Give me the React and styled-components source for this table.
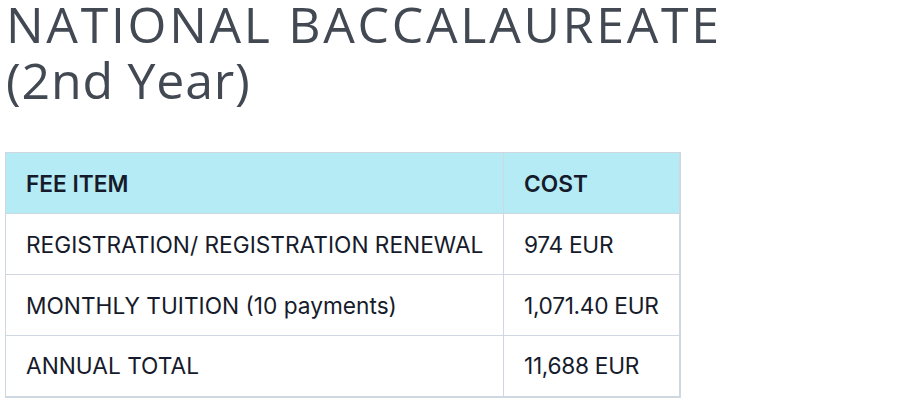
import React from "react";
import styled, { createGlobalStyle } from "styled-components";

const Global = createGlobalStyle`
  html, body { margin: 0; padding: 0; background: #ffffff; }
  body { font-family: "Inter", "Liberation Sans", sans-serif; }
`;

const Page = styled.div`
  padding: 0 5px;
  width: 902px;
  height: 400px;
  overflow: hidden;
  box-sizing: border-box;
`;

const Title = styled.h1`
  margin: -4px 0 0 0;
  padding-left: 1px;
  font-family: "Open Sans", "Liberation Sans", sans-serif;
  font-weight: 400;
  font-size: 50px;
  line-height: 56px;
  color: #434953;
`;

const TitleLine = styled.span`
  display: block;
  letter-spacing: ${(p) => p.$spacing}px;
  white-space: nowrap;
`;

const Table = styled.table`
  margin-top: 44px;
  border-collapse: collapse;
  table-layout: fixed;
  width: 674px;
  border-right: 2px solid #cfd7e0;
  border-bottom: 2px solid #cfd7e0;
`;

const Col = styled.col`
  width: ${(p) => p.$w}px;
`;

const Cell = styled.td`
  border: 1px solid #cfd7e0;
  height: 61px;
  padding: 0 20px;
  box-sizing: border-box;
  font-size: 22.7px;
  font-weight: ${(p) => (p.$head ? 600 : 400)};
  color: #161b2b;
  text-align: left;
  vertical-align: middle;
  background: ${(p) => (p.$head ? "#b4ebf4" : "#ffffff")};
  white-space: nowrap;
  overflow: visible;
  letter-spacing: ${(p) => (p.$tight ? "-0.3px" : "0")};
`;

const rows = [
  ["REGISTRATION/ REGISTRATION RENEWAL", "974 EUR"],
  ["MONTHLY TUITION (10 payments)", "1,071.40 EUR"],
  ["ANNUAL TOTAL", "11,688 EUR"],
];

export default function App() {
  return (
    <Page>
      <Global />
      <Title>
        <TitleLine $spacing={2.7}>NATIONAL BACCALAUREATE</TitleLine>
        <TitleLine $spacing={0.8}>(2nd Year)</TitleLine>
      </Title>
      <Table>
        <colgroup>
          <Col $w={498} />
          <Col $w={176} />
        </colgroup>
        <thead>
          <tr>
            <Cell as="th" $head>FEE ITEM</Cell>
            <Cell as="th" $head>COST</Cell>
          </tr>
        </thead>
        <tbody>
          {rows.map(([a, b]) => (
            <tr key={a}>
              <Cell>{a}</Cell>
              <Cell $tight>{b}</Cell>
            </tr>
          ))}
        </tbody>
      </Table>
    </Page>
  );
}
